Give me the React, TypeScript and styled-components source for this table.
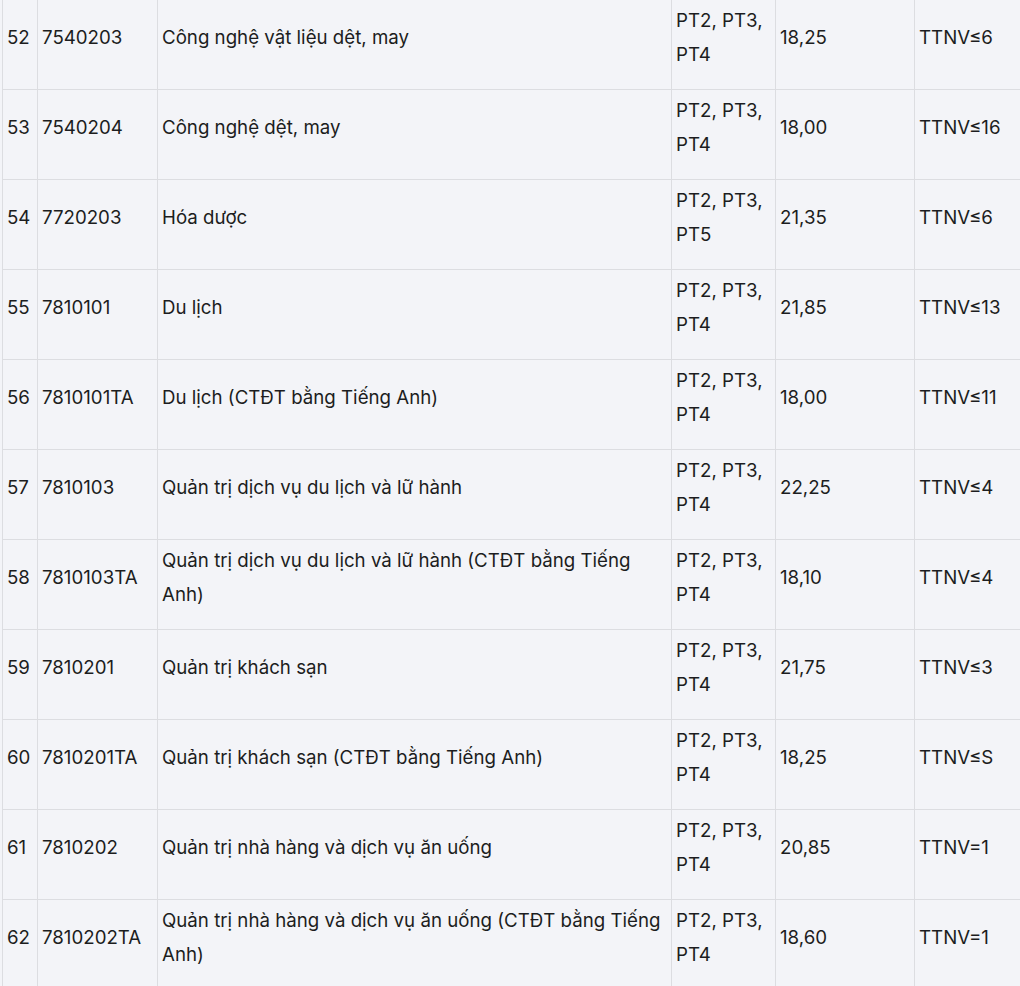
import React from "react";
import styled, { createGlobalStyle } from "styled-components";

const Global = createGlobalStyle`
  html, body { margin: 0; padding: 0; background: #f3f4f8; overflow: hidden; }
  body { font-family: Inter, "Noto Sans", sans-serif; color: #1c1d20; }
`;

const Wrap = styled.div`
  padding-left: 2px;
  margin-top: -1px;
  width: 1040px;
`;

const Table = styled.table`
  border-collapse: collapse;
  table-layout: fixed;
  width: 1030px;
  font-size: 18.7px;
  line-height: 34px;
`;

const Col = styled.col<{ $w: number }>`
  width: ${(p) => p.$w}px;
`;

const Cell = styled.td`
  border: 1px solid #dcdde1;
  padding: 3px 4px 17px 4px;
  height: 69px;
  vertical-align: middle;
  white-space: normal;
`;

const widths = [35, 120, 514, 104, 139, 118];

const rows: [string, string, string, string, string, string][] = [
  ["52", "7540203", "Công nghệ vật liệu dệt, may", "PT2, PT3, PT4", "18,25", "TTNV≤6"],
  ["53", "7540204", "Công nghệ dệt, may", "PT2, PT3, PT4", "18,00", "TTNV≤16"],
  ["54", "7720203", "Hóa dược", "PT2, PT3, PT5", "21,35", "TTNV≤6"],
  ["55", "7810101", "Du lịch", "PT2, PT3, PT4", "21,85", "TTNV≤13"],
  ["56", "7810101TA", "Du lịch (CTĐT bằng Tiếng Anh)", "PT2, PT3, PT4", "18,00", "TTNV≤11"],
  ["57", "7810103", "Quản trị dịch vụ du lịch và lữ hành", "PT2, PT3, PT4", "22,25", "TTNV≤4"],
  ["58", "7810103TA", "Quản trị dịch vụ du lịch và lữ hành (CTĐT bằng Tiếng Anh)", "PT2, PT3, PT4", "18,10", "TTNV≤4"],
  ["59", "7810201", "Quản trị khách sạn", "PT2, PT3, PT4", "21,75", "TTNV≤3"],
  ["60", "7810201TA", "Quản trị khách sạn (CTĐT bằng Tiếng Anh)", "PT2, PT3, PT4", "18,25", "TTNV≤S"],
  ["61", "7810202", "Quản trị nhà hàng và dịch vụ ăn uống", "PT2, PT3, PT4", "20,85", "TTNV=1"],
  ["62", "7810202TA", "Quản trị nhà hàng và dịch vụ ăn uống (CTĐT bằng Tiếng Anh)", "PT2, PT3, PT4", "18,60", "TTNV=1"],
];

export default function App() {
  return (
    <>
      <Global />
      <Wrap>
        <Table>
          <colgroup>
            {widths.map((w, i) => (
              <Col key={i} $w={w} />
            ))}
          </colgroup>
          <tbody>
            {rows.map((r) => (
              <tr key={r[0]}>
                {r.map((c, i) => (
                  <Cell key={i}>{c}</Cell>
                ))}
              </tr>
            ))}
          </tbody>
        </Table>
      </Wrap>
    </>
  );
}
